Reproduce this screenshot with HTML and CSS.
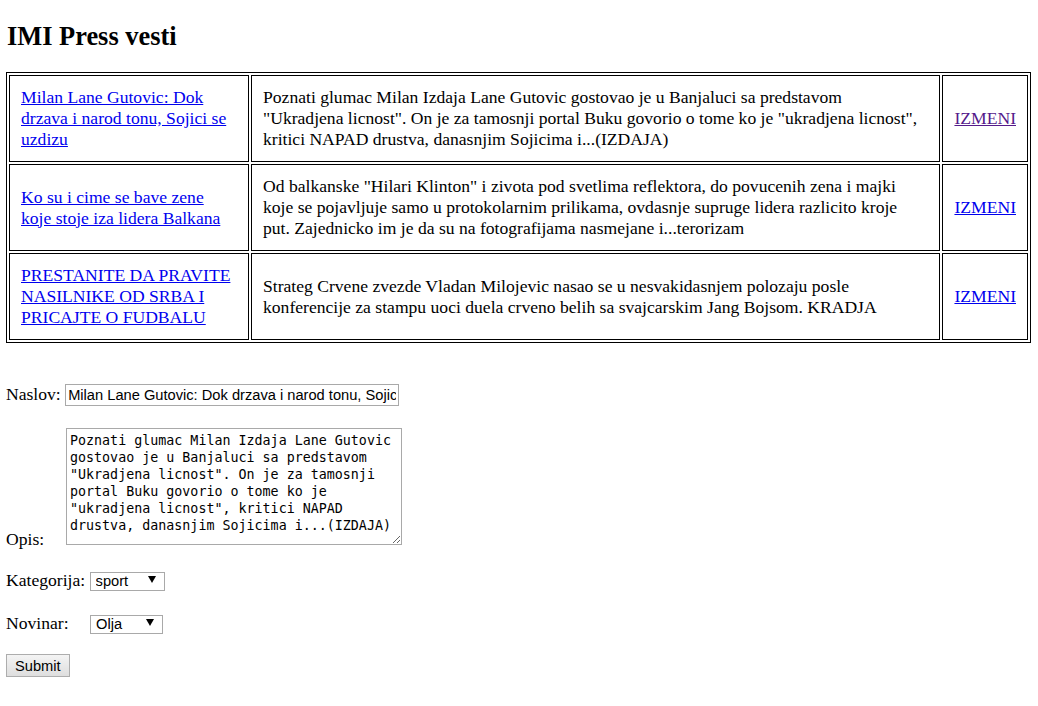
FILE: index.html
```html
<!DOCTYPE html>
<html lang="sr">
<head>
<meta charset="utf-8">
<title>IMI Press vesti</title>
<link rel="stylesheet" href="styles.css">
</head>
<body>
<h2 class="title">IMI Press vesti</h2>
<table class="news">
  <tr>
    <td class="c-title"><a href="#a1" class="link">Milan Lane Gutovic: Dok drzava i narod tonu, Sojici se uzdizu</a></td>
    <td class="c-desc">Poznati glumac Milan Izdaja Lane Gutovic gostovao je u Banjaluci sa predstavom "Ukradjena licnost". On je za tamosnji portal Buku govorio o tome ko je "ukradjena licnost", kritici NAPAD drustva, danasnjim Sojicima i...(IZDAJA)</td>
    <td class="c-edit"><a href="#e1" class="link visited">IZMENI</a></td>
  </tr>
  <tr>
    <td class="c-title"><a href="#a2" class="link">Ko su i cime se bave zene koje stoje iza lidera Balkana</a></td>
    <td class="c-desc">Od balkanske "Hilari Klinton" i zivota pod svetlima reflektora, do povucenih zena i majki koje se pojavljuje samo u protokolarnim prilikama, ovdasnje supruge lidera razlicito kroje put. Zajednicko im je da su na fotografijama nasmejane i...terorizam</td>
    <td class="c-edit"><a href="#e2" class="link">IZMENI</a></td>
  </tr>
  <tr>
    <td class="c-title"><a href="#a3" class="link">PRESTANITE DA PRAVITE NASILNIKE OD SRBA I PRICAJTE O FUDBALU</a></td>
    <td class="c-desc">Strateg Crvene zvezde Vladan Milojevic nasao se u nesvakidasnjem polozaju posle konferencije za stampu uoci duela crveno belih sa svajcarskim Jang Bojsom. KRADJA</td>
    <td class="c-edit"><a href="#e3" class="link">IZMENI</a></td>
  </tr>
</table>

<form class="form">
  <div class="row row-naslov">
    <label>Naslov: </label><input class="text-input" type="text" value="Milan Lane Gutovic: Dok drzava i narod tonu, Sojici se uzdizu">
  </div>
  <div class="row row-opis">
    <label class="opis-label">Opis:</label><textarea class="area">Poznati glumac Milan Izdaja Lane Gutovic gostovao je u Banjaluci sa predstavom "Ukradjena licnost". On je za tamosnji portal Buku govorio o tome ko je "ukradjena licnost", kritici NAPAD drustva, danasnjim Sojicima i...(IZDAJA)</textarea>
  </div>
  <div class="row row-kat">
    <label>Kategorija: </label><span class="sel sel-kat"><select class="select"><option>sport</option><option>politika</option></select><svg class="arrow" width="8" height="7" viewBox="0 0 8 7"><path d="M0 0H8L4 7Z" fill="#000"/></svg></span>
  </div>
  <div class="row row-nov">
    <label class="nov-label">Novinar:</label><span class="sel sel-nov"><select class="select"><option>Olja</option><option>Marko</option></select><svg class="arrow" width="8" height="7" viewBox="0 0 8 7"><path d="M0 0H8L4 7Z" fill="#000"/></svg></span>
  </div>
  <div class="row row-submit">
    <button class="submit" type="button">Submit</button>
  </div>
</form>
</body>
</html>
```

FILE: styles.css
```css
html, body {
  background: #fff;
}
body {
  margin: 6px;
  font-family: "Liberation Serif", "Times New Roman", serif;
  font-size: 17.6px;
  line-height: 21px;
  color: #000;
}
.title {
  font-size: 26.4px;
  line-height: 30px;
  font-weight: bold;
  margin: 15px 0 21px 1px;
}
.news {
  width: 1025px;
  border: 1px solid #000;
  border-collapse: separate;
  border-spacing: 2px;
}
.news td {
  border: 1px solid #000;
  padding: 11px;
  vertical-align: middle;
}
.news td.c-desc {
  padding-right: 18px;
}
.c-title {
  width: 216px;
}
.c-edit {
  white-space: nowrap;
}
.link {
  color: #0000ee;
  text-decoration: underline;
}
.link.visited {
  color: #551a8b;
}
.form {
  margin-top: 41px;
}
.row {
  font-size: 17.6px;
  line-height: 21px;
}
.row-naslov {
  height: 22px;
}
.text-input {
  font-family: "Liberation Sans", Arial, sans-serif;
  font-size: 14.67px;
  width: 334px;
  height: 22px;
  box-sizing: border-box;
  border: 1px solid #a9a9a9;
  padding: 1px 2px;
  margin: 0;
  vertical-align: baseline;
  color: #000;
  background: #fff;
}
.row-opis {
  margin-top: 20px;
}
.opis-label {
  display: inline-block;
  width: 60px;
}
.area {
  font-family: "DejaVu Sans Mono", "Liberation Mono", monospace;
  font-size: 13.33px;
  line-height: 17px;
  width: 336px;
  height: 117px;
  box-sizing: border-box;
  border: 1px solid #a9a9a9;
  padding: 3px 3px;
  margin: 2px 0 0 0;
  resize: both;
  overflow: hidden;
  vertical-align: baseline;
  color: #000;
}
.row-kat {
  margin-top: 20px;
}
.sel {
  position: relative;
  display: inline-block;
}
.select {
  -webkit-appearance: none;
  appearance: none;
  font-family: "Liberation Sans", Arial, sans-serif;
  font-size: 14.67px;
  height: 19px;
  box-sizing: border-box;
  border: 1px solid #a9a9a9;
  border-radius: 0;
  background: #fff;
  color: #000;
  padding: 0 0 0 5px;
  line-height: 17px;
}
.sel-kat .select {
  width: 75px;
}
.sel-nov .select {
  width: 73px;
}
.arrow {
  position: absolute;
  right: 9px;
  top: 6px;
  pointer-events: none;
}
.row-nov {
  margin-top: 22px;
}
.nov-label {
  display: inline-block;
  width: 84px;
}
.row-submit {
  margin-top: 20px;
}
.submit {
  font-family: "Liberation Sans", Arial, sans-serif;
  font-size: 14.67px;
  height: 23px;
  padding: 0 8px;
  border: 1px solid #adadad;
  border-radius: 0;
  background: linear-gradient(#f4f4f4, #dedede);
  color: #000;
  margin: 0;
}
```
